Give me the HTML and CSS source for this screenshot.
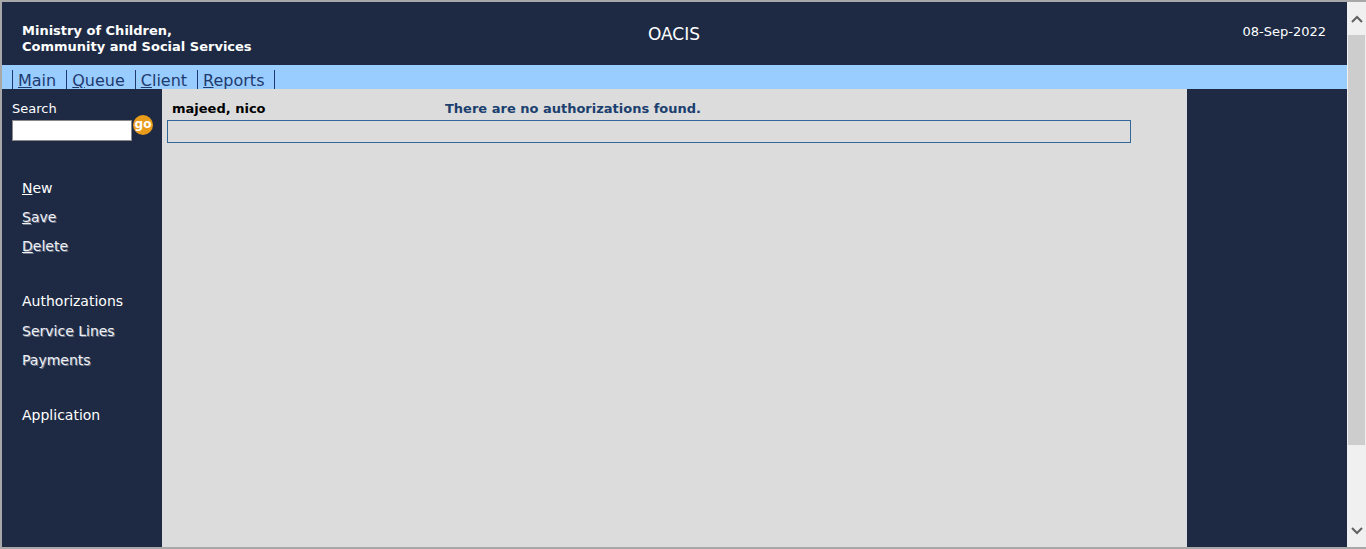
FILE: index.html
```html
<!DOCTYPE html>
<html>
<head>
<meta charset="utf-8">
<title>OACIS</title>
<link rel="stylesheet" href="styles.css">
</head>
<body>
<div class="frame">
  <div class="page">
    <header class="header">
      <div class="ministry">Ministry of Children,<br>Community and Social Services</div>
      <div class="app-title">OACIS</div>
      <div class="date">08-Sep-2022</div>
    </header>
    <nav class="nav">
      <a class="nav-item" href="#"><u>M</u>ain</a>
      <a class="nav-item" href="#"><u>Q</u>ueue</a>
      <a class="nav-item" href="#"><u>C</u>lient</a>
      <a class="nav-item" href="#"><u>R</u>eports</a>
      <span class="nav-end"></span>
    </nav>
    <div class="body-row">
      <aside class="sidebar">
        <div class="search-label">Search</div>
        <div class="search-row">
          <input class="search-input" type="text">
          <span class="go">go</span>
        </div>
        <div class="menu-group first">
          <a class="menu-link" href="#"><u>N</u>ew</a>
          <a class="menu-link dim" href="#"><u>S</u>ave</a>
          <a class="menu-link dim" href="#"><u>D</u>elete</a>
        </div>
        <div class="menu-group">
          <a class="menu-link" href="#">Authorizations</a>
          <a class="menu-link dim tall" href="#">Service Lines</a>
          <a class="menu-link dim" href="#">Payments</a>
        </div>
        <div class="menu-group">
          <a class="menu-link" href="#">Application</a>
        </div>
      </aside>
      <main class="content">
        <div class="content-head">
          <span class="client-name">majeed, nico</span>
          <span class="message">There are no authorizations found.</span>
        </div>
        <div class="result-box"></div>
      </main>
      <div class="right-panel"></div>
    </div>
  </div>
  <div class="scrollbar">
    <div class="sb-arrow">
      <svg width="12" height="8" viewBox="0 0 12 8"><path d="M1 7 L6 2 L11 7" fill="none" stroke="#606060" stroke-width="2"/></svg>
    </div>
    <div class="sb-thumb"></div>
    <div class="sb-track"></div>
    <div class="sb-arrow">
      <svg width="12" height="8" viewBox="0 0 12 8"><path d="M1 1 L6 6 L11 1" fill="none" stroke="#606060" stroke-width="2"/></svg>
    </div>
  </div>
</div>
</body>
</html>
```
FILE: styles.css
```css
html, body {
  margin: 0;
  padding: 0;
  overflow: hidden;
}
body {
  font-family: "DejaVu Sans", Verdana, sans-serif;
  background: #ffffff;
}
.frame {
  display: flex;
  width: 1366px;
  height: 549px;
  box-sizing: border-box;
  border-top: 2px solid #a8a8a8;
  border-left: 2px solid #a8a8a8;
  border-bottom: 2px solid #a8a8a8;
}
.page {
  flex: 1;
  display: flex;
  flex-direction: column;
  min-width: 0;
}
.header {
  height: 63px;
  background: #1e2a44;
  color: #ffffff;
  display: flex;
  align-items: flex-start;
  box-sizing: border-box;
  padding: 21px 21px 0 20px;
}
.ministry {
  font-size: 13px;
  font-weight: bold;
  line-height: 16px;
  width: 300px;
}
.app-title {
  flex: 1;
  text-align: center;
  font-size: 17px;
  line-height: 20px;
  padding-top: 1px;
}
.date {
  width: 300px;
  text-align: right;
  font-size: 13px;
  line-height: 16px;
  padding-top: 1px;
}
.nav {
  height: 24px;
  background: #99ccff;
  display: flex;
  align-items: flex-end;
  padding-left: 10px;
  box-sizing: border-box;
}
.nav-item {
  display: block;
  border-left: 1px solid #1e3a6e;
  padding: 2px 10px 0 5px;
  font-size: 16px;
  line-height: 17px;
  color: #1e3a6e;
  text-decoration: none;
}
.nav-end {
  display: block;
  border-left: 1px solid #1e3a6e;
  height: 19px;
}
.body-row {
  flex: 1;
  display: flex;
}
.sidebar {
  width: 160px;
  background: #1e2a44;
  color: #ffffff;
  box-sizing: border-box;
  padding: 12px 0 0 10px;
}
.search-label {
  font-size: 13px;
  line-height: 16px;
}
.search-row {
  display: flex;
  align-items: flex-start;
  margin-top: 2px;
}
.search-input {
  width: 120px;
  height: 21px;
  box-sizing: border-box;
  border: 1px solid #8a8a8a;
  margin: 1px 1px 0 0;
  padding: 0;
  background: #ffffff;
}
.go {
  width: 20px;
  height: 20px;
  border-radius: 50%;
  background: #e99b1c;
  color: #ffffff;
  font-size: 12px;
  font-weight: bold;
  line-height: 18px;
  text-align: center;
  margin-top: -4px;
}
.menu-group {
  display: flex;
  flex-direction: column;
  padding-left: 10px;
  margin-top: 26px;
}
.menu-group.first {
  margin-top: 33px;
}
.menu-link {
  display: block;
  font-size: 14px;
  line-height: 29px;
  color: #ffffff;
  text-decoration: none;
}
.menu-link.tall {
  padding-top: 1px;
}
.menu-link.dim {
  color: #eef0f4;
  text-shadow: 1px 1px 0 #6d7689;
}
.content {
  flex: 1;
  background: #dcdcdc;
  box-sizing: border-box;
  padding: 12px 0 0 5px;
}
.content-head {
  display: flex;
  font-size: 13px;
  font-weight: bold;
  line-height: 16px;
  padding-left: 5px;
}
.client-name {
  width: 273px;
  color: #000000;
}
.message {
  color: #1b3f6e;
}
.result-box {
  width: 964px;
  height: 23px;
  box-sizing: border-box;
  border: 1px solid #336699;
  margin-top: 3px;
}
.right-panel {
  width: 160px;
  background: #1e2a44;
}
.scrollbar {
  width: 19px;
  background: #f0f0f0;
  display: flex;
  flex-direction: column;
}
.sb-arrow {
  height: 33px;
  display: flex;
  align-items: center;
  justify-content: center;
}
.sb-thumb {
  height: 410px;
  background: #cdcdcd;
  margin: 0 1px;
}
.sb-track {
  flex: 1;
}
```
